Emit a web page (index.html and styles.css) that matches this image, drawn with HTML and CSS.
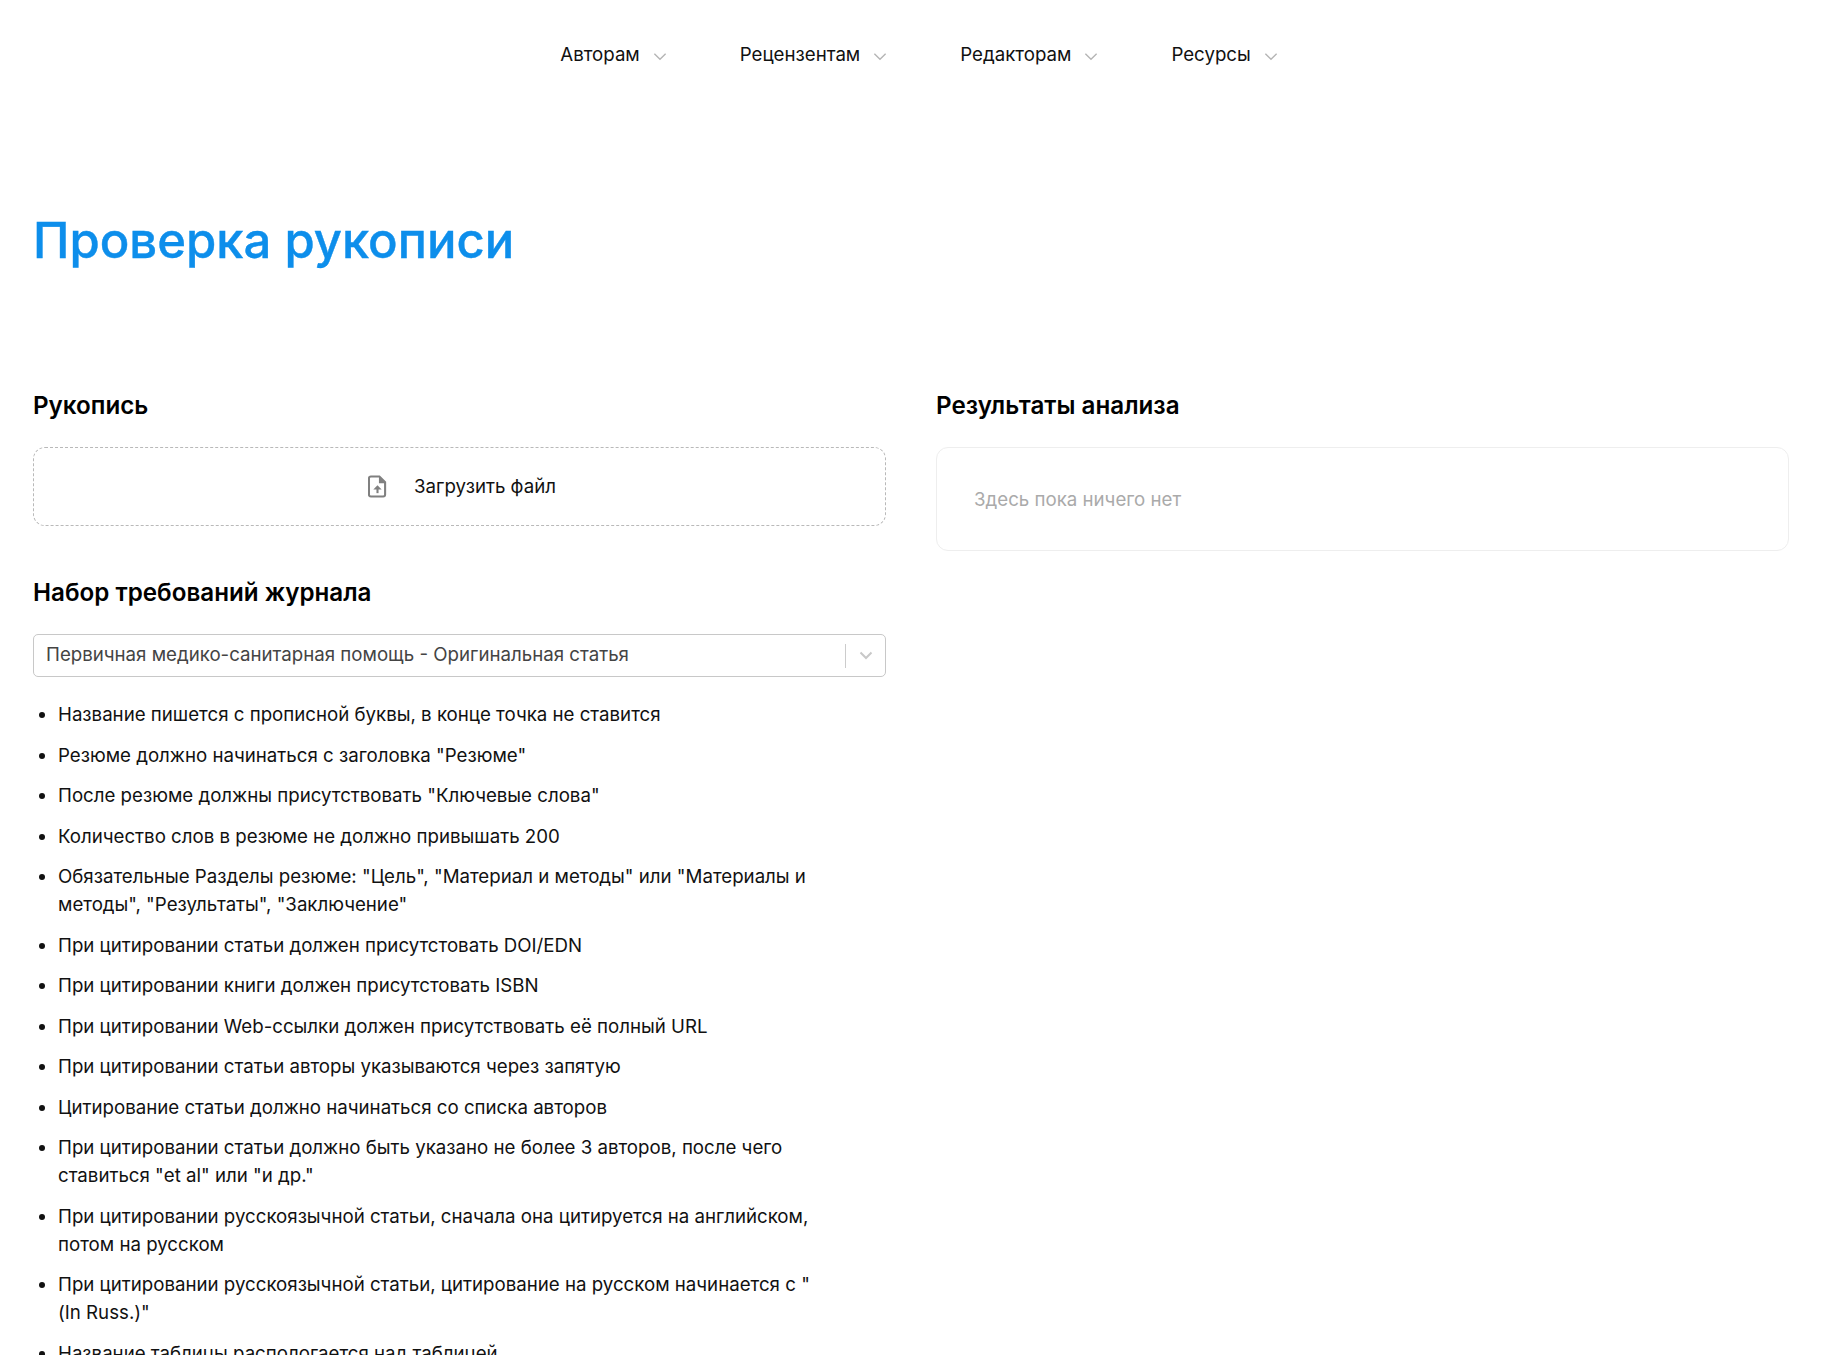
FILE: index.html
```html
<!DOCTYPE html>
<html lang="ru">
<head>
<meta charset="utf-8">
<title>Проверка рукописи</title>
<link rel="stylesheet" href="styles.css">
</head>
<body>
<header class="nav">
  <a class="nav-item">Авторам<svg class="chev" viewBox="0 0 12 8"><path d="M1 1.5l5 5 5-5"/></svg></a>
  <a class="nav-item">Рецензентам<svg class="chev" viewBox="0 0 12 8"><path d="M1 1.5l5 5 5-5"/></svg></a>
  <a class="nav-item">Редакторам<svg class="chev" viewBox="0 0 12 8"><path d="M1 1.5l5 5 5-5"/></svg></a>
  <a class="nav-item">Ресурсы<svg class="chev" viewBox="0 0 12 8"><path d="M1 1.5l5 5 5-5"/></svg></a>
</header>
<main class="page">
  <h1 class="title">Проверка рукописи</h1>
  <div class="columns">
    <section class="col">
      <h2 class="heading">Рукопись</h2>
      <div class="upload">
        <svg class="file-icon" viewBox="0 0 20 24"><path class="file-outline" d="M3 1.5h9l6 6v13a2 2 0 0 1-2 2H3a2 2 0 0 1-2-2v-17a2 2 0 0 1 2-2z"/><path class="file-fold" d="M11.5 1.5v7h7z"/><path class="file-arrow" d="M10 19v-5.5"/><path class="file-fold" d="M5.6 15.2L10 10.6l4.4 4.6z"/></svg>
        <span>Загрузить файл</span>
      </div>
      <h2 class="heading heading-second">Набор требований журнала</h2>
      <div class="select">
        <span class="select-value">Первичная медико-санитарная помощь - Оригинальная статья</span>
        <span class="select-sep"></span>
        <svg class="select-chev" viewBox="0 0 14 9"><path d="M1.5 1.5L7 7l5.5-5.5"/></svg>
      </div>
      <ul class="rules">
        <li>Название пишется с прописной буквы, в конце точка не ставится</li>
        <li>Резюме должно начинаться с заголовка "Резюме"</li>
        <li>После резюме должны присутствовать "Ключевые слова"</li>
        <li>Количество слов в резюме не должно привышать 200</li>
        <li>Обязательные Разделы резюме: "Цель", "Материал и методы" или "Материалы и методы", "Результаты", "Заключение"</li>
        <li>При цитировании статьи должен присутстовать DOI/EDN</li>
        <li>При цитировании книги должен присутстовать ISBN</li>
        <li>При цитировании Web-ссылки должен присутствовать её полный URL</li>
        <li>При цитировании статьи авторы указываются через запятую</li>
        <li>Цитирование статьи должно начинаться со списка авторов</li>
        <li>При цитировании статьи должно быть указано не более 3 авторов, после чего ставиться "et al" или "и др."</li>
        <li>При цитировании русскоязычной статьи, сначала она цитируется на английском, потом на русском</li>
        <li>При цитировании русскоязычной статьи, цитирование на русском начинается с " (In Russ.)"</li>
        <li>Название таблицы распологается над таблицей</li>
      </ul>
    </section>
    <section class="col">
      <h2 class="heading">Результаты анализа</h2>
      <div class="results">Здесь пока ничего нет</div>
    </section>
  </div>
</main>
</body>
</html>
```
FILE: styles.css
```css
* { box-sizing: border-box; }
html, body { height: 100%; }
body {
  margin: 0;
  height: 1355px;
  overflow: hidden;
  background: #fff;
  color: #111;
  font-family: Inter, "Liberation Sans", sans-serif;
  font-size: 18.68px;
}
.nav {
  display: flex;
  justify-content: center;
  gap: 73px;
  height: 110px;
  padding-top: 41px;
  padding-left: 4px;
  line-height: 28px;
}
.nav-item { display: flex; align-items: center; height: 28px; color: #111; }
.chev { width: 14px; height: 9px; margin-left: 13px; margin-top: 3px; fill: none; stroke: #b5b5b5; stroke-width: 1.2; }
.page { padding: 0 45px 0 33px; }
.title {
  margin: 96px 0 0;
  font-size: 49px;
  line-height: 70px;
  font-weight: 500;
  color: #0d8eeb;
  -webkit-text-stroke: 0.4px #0d8eeb;
}
.columns {
  display: grid;
  grid-template-columns: 1fr 1fr;
  gap: 50px;
  margin-top: 114px;
}
.heading {
  margin: 0 0 25px;
  font-size: 24.2px;
  line-height: 32px;
  font-weight: 600;
  color: #000;
}
.heading-second { margin-top: 51px; }
.upload {
  display: flex;
  align-items: center;
  justify-content: center;
  gap: 27px;
  height: 79px;
  padding: 0 0 1px 5px;
  border: 1px dashed #b9b9b9;
  border-radius: 12px;
}
.file-icon { width: 19px; height: 23px; }
.file-outline { fill: none; stroke: #808080; stroke-width: 2.2; }
.file-fold { fill: #808080; }
.file-arrow { fill: none; stroke: #808080; stroke-width: 2.2; }
.select {
  display: flex;
  align-items: center;
  height: 43px;
  padding: 0 12px;
  border: 1px solid #c8c8c8;
  border-radius: 5px;
  color: #444;
}
.select-value { flex: 1; margin-top: -2px; }
.select-sep { width: 1px; height: 24px; background: #ccc; margin-right: 13px; }
.select-chev { width: 14px; height: 9px; fill: none; stroke: #c8c8c8; stroke-width: 2; }
.rules {
  list-style: disc;
  margin: 24px 0 0;
  padding: 0 60px 0 25px;
  line-height: 28px;
}
.rules li { margin-bottom: 12.5px; }
.results {
  height: 104px;
  padding: 38px 37px;
  border: 1px solid #eee;
  border-radius: 12px;
  color: #aaa;
  line-height: 28px;
}
```
